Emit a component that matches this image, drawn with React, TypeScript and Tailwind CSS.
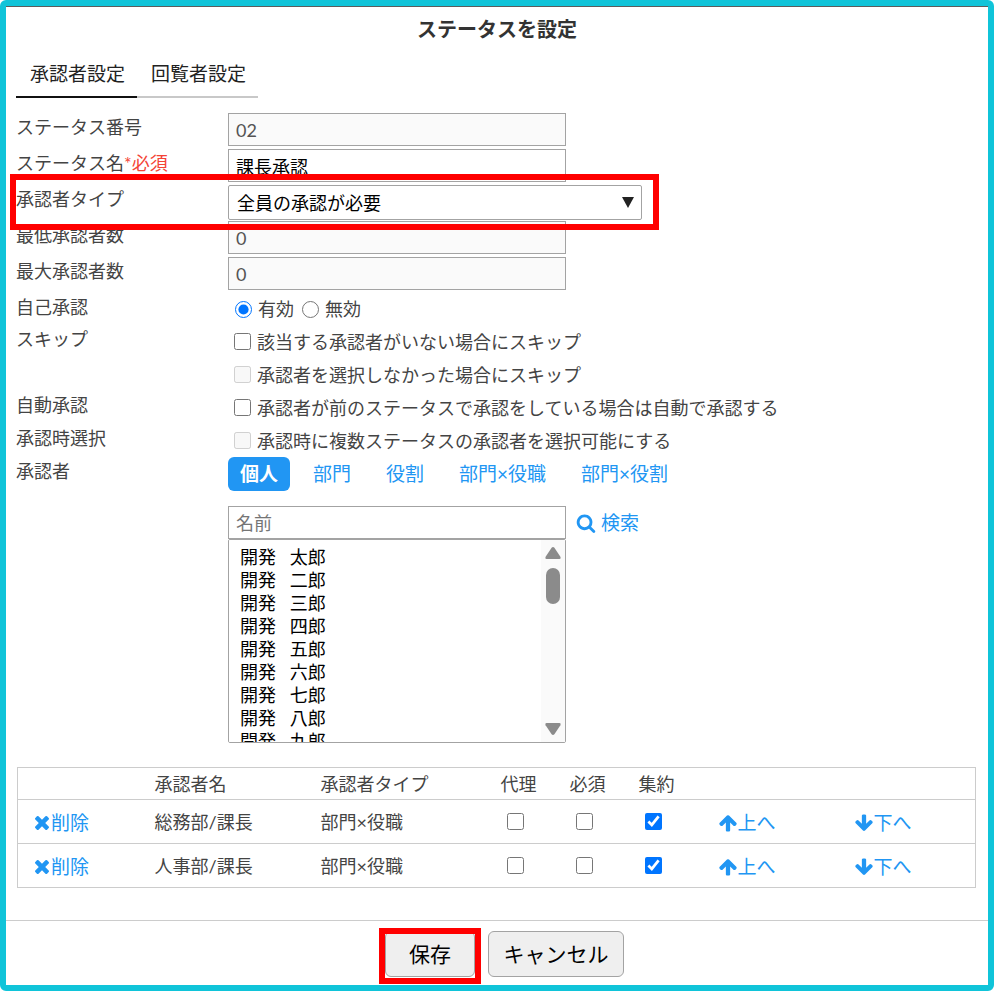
import type { ReactNode } from 'react'

const ICONS = {
  search: {
    box: '0 0 1792 1792',
    d: 'M1216 832q0-185-131.5-316.5t-316.5-131.5-316.5 131.5-131.5 316.5 131.5 316.5 316.5 131.5 316.5-131.5 131.5-316.5zm512 832q0 52-38 90t-90 38q-54 0-90-38l-343-342q-179 124-399 124-143 0-273.5-55.5t-225-150-150-225-55.5-273.5 55.5-273.5 150-225 225-150 273.5-55.5 273.5 55.5 225 150 150 225 55.5 273.5q0 220-124 399l343 343q37 37 37 90z',
  },
  times: {
    box: '302 366 1188 1188',
    d: 'M1490 1322q0 40-28 68l-136 136q-28 28-68 28t-68-28l-294-294-294 294q-28 28-68 28t-68-28l-136-136q-28-28-28-68t28-68l294-294-294-294q-28-28-28-68t28-68l136-136q28-28 68-28t68 28l294 294 294-294q28-28 68-28t68 28l136 136q28 28 28 68t-28 68l-294 294 294 294q28 28 28 68z',
  },
  up: {
    box: '0 0 1792 1792',
    d: 'M1675 971q0 51-37 90l-75 75q-38 38-91 38-54 0-90-38l-294-293v704q0 52-37.5 84.5t-90.5 32.5h-128q-53 0-90.5-32.5t-37.5-84.5v-704l-294 293q-36 38-90 38t-90-38l-75-75q-38-38-38-90 0-53 38-91l651-651q35-37 90-37 54 0 91 37l651 651q37 39 37 91z',
  },
  down: {
    box: '0 0 1792 1792',
    d: 'M1675 832q0 53-37 90l-651 652q-39 37-91 37-53 0-90-37l-651-652q-38-36-38-90 0-53 38-91l74-75q39-37 91-37 53 0 90 37l294 294v-704q0-52 38-90t90-38h128q52 0 90 38t38 90v704l294-294q37-37 90-37 52 0 91 37l75 75q37 39 37 91z',
  },
}

const PEOPLE = ['太郎', '二郎', '三郎', '四郎', '五郎', '六郎', '七郎', '八郎', '九郎', '十郎']
const TARGETS = ['個人', '部門', '役割', '部門×役職', '部門×役割']
const APPROVERS = [
  { name: '総務部/課長', type: '部門×役職' },
  { name: '人事部/課長', type: '部門×役職' },
]

const INPUT =
  'block h-[33px] w-[338px] border border-[#a3a3a3] px-[7px] text-lg text-black disabled:bg-[#fafafa] disabled:text-[#545454]'

function Icon({ name, className }: { name: keyof typeof ICONS; className: string }) {
  return (
    <svg viewBox={ICONS[name].box} fill="currentColor" aria-hidden="true" className={`shrink-0 ${className}`}>
      <path d={ICONS[name].d} />
    </svg>
  )
}

function Highlight({ className }: { className: string }) {
  return (
    <div
      aria-hidden="true"
      className={`pointer-events-none absolute z-10 border-6 border-[#ff0000] ${className}`}
    />
  )
}

function Row({ label, htmlFor, required, className, children }: {
  label: string
  htmlFor?: string
  required?: boolean
  className: string
  children: ReactNode
}) {
  const text = (
    <>
      {label}
      {required && <span className="text-[#f44336]">*必須</span>}
    </>
  )
  return (
    <div className={`relative flex items-start ${className}`}>
      <div className="w-[212px] shrink-0 leading-7">
        {htmlFor ? <label htmlFor={htmlFor}>{text}</label> : <span>{text}</span>}
      </div>
      <div className="min-w-0 flex-1">{children}</div>
    </div>
  )
}

function CheckLine({ label, disabled }: { label: string; disabled?: boolean }) {
  return (
    <label className="flex h-[33px] items-center gap-[6px] pl-[6px]">
      <input type="checkbox" disabled={disabled} className="size-[17px] shrink-0" />
      {label}
    </label>
  )
}

export default function App() {
  return (
    <main className="min-h-screen rounded-md border-6 border-[#10c4d9] bg-white font-['Lato','Noto_Sans_CJK_JP',sans-serif] text-lg text-[#444]">
      <div className="border-t border-[#5c5c5c]">
        <h1 className="text-center text-xl leading-[44px] font-bold text-[#333]">ステータスを設定</h1>
      </div>

      <div className="px-[10px]">
        <nav className="flex text-[19px] leading-[45px] text-[#222]">
          <a href="#approver" className="border-b-2 border-[#111] pr-3 pl-[14px]">承認者設定</a>
          <a href="#reader" className="border-b-2 border-[#c8c8c8] pr-3 pl-[14px]">回覧者設定</a>
        </nav>

        <form className="mt-[15px]">
          <Row label="ステータス番号" htmlFor="number" className="h-9">
            <input id="number" disabled defaultValue="02" className={INPUT} />
          </Row>
          <Row label="ステータス名" htmlFor="name" required className="h-9">
            <input id="name" defaultValue="課長承認" className={INPUT} />
          </Row>
          <Row label="承認者タイプ" htmlFor="type" className="h-9">
            <div className="relative w-[414px]">
              <select
                id="type"
                className="block h-[35px] w-full appearance-none rounded-xs border border-[#a3a3a3] bg-white px-2 text-black"
              >
                <option>全員の承認が必要</option>
              </select>
              <svg
                viewBox="0 0 12 11"
                aria-hidden="true"
                className="pointer-events-none absolute top-3 right-2 h-[11px] w-3"
              >
                <path d="M0 0h12L6 11z" fill="#222" />
              </svg>
            </div>
            <Highlight className="-top-[11px] -left-[6px] h-[56px] w-[649px]" />
          </Row>
          <Row label="最低承認者数" htmlFor="min" className="h-9">
            <input id="min" disabled defaultValue="0" className={INPUT} />
          </Row>
          <Row label="最大承認者数" htmlFor="max" className="h-9">
            <input id="max" disabled defaultValue="0" className={INPUT} />
          </Row>
          <Row label="自己承認" className="h-8">
            <div className="flex h-8 items-center gap-2 pl-[7px]">
              <label className="flex items-center gap-[6px]">
                <input type="radio" name="self" defaultChecked className="size-[17px]" />
                有効
              </label>
              <label className="flex items-center gap-[6px]">
                <input type="radio" name="self" className="size-[17px]" />
                無効
              </label>
            </div>
          </Row>
          <Row label="スキップ" className="h-[66px]">
            <CheckLine label="該当する承認者がいない場合にスキップ" />
            <CheckLine label="承認者を選択しなかった場合にスキップ" disabled />
          </Row>
          <Row label="自動承認" className="h-[33px]">
            <CheckLine label="承認者が前のステータスで承認をしている場合は自動で承認する" />
          </Row>
          <Row label="承認時選択" className="h-[33px]">
            <CheckLine label="承認時に複数ステータスの承認者を選択可能にする" disabled />
          </Row>

          <Row label="承認者" className="">
            <div className="flex gap-[11px] text-[19px] leading-[34px] text-[#2196f3]">
              {TARGETS.map((t, idx) => (
                <button
                  key={t}
                  type="button"
                  className={idx === 0 ? 'rounded-md bg-[#2196f3] px-3 font-bold text-white' : 'px-3'}
                >
                  {t}
                </button>
              ))}
            </div>
            <div className="mt-[15px] flex items-center gap-[10px]">
              <input aria-label="名前" placeholder="名前" className={`${INPUT} placeholder:text-[#757575]`} />
              <a href="#search" className="flex items-center gap-[5px] text-[19px] leading-[33px] text-[#2196f3]">
                <Icon name="search" className="size-5" />
                検索
              </a>
            </div>
            <div className="relative h-[204px] w-[338px]">
              <select
                multiple
                aria-label="承認者の一覧"
                className="block size-full overflow-y-auto rounded-xs border border-[#a3a3a3] bg-white py-[3px] pl-[11px] text-black [scrollbar-width:none]"
              >
                {PEOPLE.map((p) => (
                  <option key={p} className="h-[23px] p-0 leading-[23px]">
                    {`開発\u00a0\u00a0\u00a0${p}`}
                  </option>
                ))}
              </select>
              <div
                aria-hidden="true"
                className="pointer-events-none absolute inset-y-px right-px flex w-6 flex-col items-center bg-[#fafafa] py-[7px] text-[#8b8b8b]"
              >
                <svg viewBox="0 0 16 12" fill="currentColor" className="h-3 w-4">
                  <path d="M6.6.8q1.400-1.600 2.800 0l6 9q.8 2.200-1 2.200H1.600q-1.800 0-1-2.200z" />
                </svg>
                <div className="mt-[9px] h-9 w-[14px] rounded-full bg-[#8b8b8b]" />
                <svg viewBox="0 0 16 12" fill="currentColor" className="mt-auto h-3 w-4">
                  <path d="M6.600 11.200q1.400 1.600 2.800 0l6-9q.8-2.200-1-2.200H1.600Q-.2 0 .6 2.200z" />
                </svg>
              </div>
            </div>
          </Row>
        </form>

        <table className="mt-6 ml-px w-[calc(100%-3px)] table-fixed border-collapse border border-[#ccc] text-left">
          <colgroup>
            <col className="w-[137px]" />
            <col className="w-[166px]" />
            <col className="w-[180px]" />
            <col className="w-[69px]" />
            <col className="w-[69px]" />
            <col className="w-[79px]" />
            <col className="w-[136px]" />
            <col />
          </colgroup>
          <thead>
            <tr className="h-8 border-b border-[#ccc]">
              <td />
              <th className="font-normal">承認者名</th>
              <th className="font-normal">承認者タイプ</th>
              <th className="font-normal">代理</th>
              <th className="font-normal">必須</th>
              <th className="font-normal">集約</th>
              <td />
              <td />
            </tr>
          </thead>
          <tbody>
            {APPROVERS.map((a) => (
              <tr key={a.name} className="h-11 border-b border-[#ccc]">
                <td className="pl-[17px]">
                  <a href="#delete" className="flex items-center gap-[2px] pt-[3px] text-[19px] text-[#2196f3]">
                    <Icon name="times" className="size-[14px]" />
                    削除
                  </a>
                </td>
                <td>{a.name}</td>
                <td>{a.type}</td>
                <td className="pl-[6px]">
                  <input type="checkbox" aria-label="代理" className="block size-[17px]" />
                </td>
                <td className="pl-[6px]">
                  <input type="checkbox" aria-label="必須" className="block size-[17px]" />
                </td>
                <td className="pl-[6px]">
                  <input type="checkbox" aria-label="集約" defaultChecked className="block size-[17px]" />
                </td>
                <td>
                  <a href="#up" className="flex items-center pt-[3px] text-[19px] text-[#2196f3]">
                    <Icon name="up" className="size-5" />
                    上へ
                  </a>
                </td>
                <td>
                  <a href="#down" className="flex items-center pt-[3px] text-[19px] text-[#2196f3]">
                    <Icon name="down" className="size-5" />
                    下へ
                  </a>
                </td>
              </tr>
            ))}
          </tbody>
        </table>
      </div>

      <footer className="mt-8 flex justify-center gap-[13px] border-t border-[#ccc] pt-[10px] pb-2 pl-[15px] text-[21px] leading-[44px] text-black">
        <div className="relative">
          <button type="button" className="block w-[90px] rounded-md border border-[#a3a3a3] bg-[#efefef]">
            保存
          </button>
          <Highlight className="-top-[3px] -left-[6px] h-[56px] w-[102px]" />
        </div>
        <button type="button" className="w-[136px] rounded-md border border-[#a3a3a3] bg-[#efefef]">
          キャンセル
        </button>
      </footer>
    </main>
  )
}
